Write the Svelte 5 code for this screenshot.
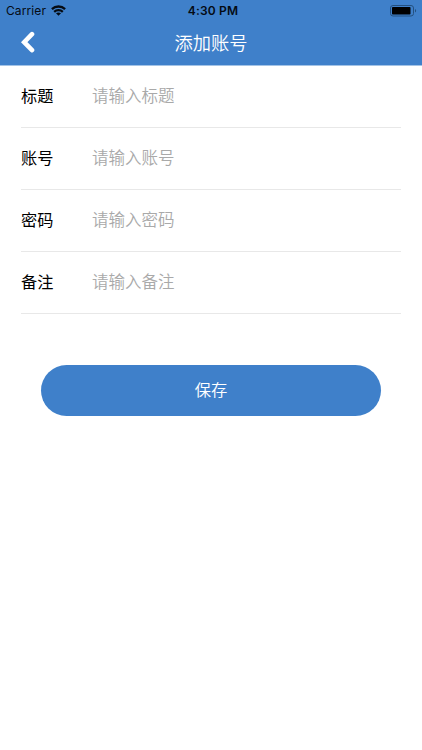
<script>
  let fields = $state([
    { name: 'title', label: '标题', placeholder: '请输入标题', value: '' },
    { name: 'account', label: '账号', placeholder: '请输入账号', value: '' },
    { name: 'password', label: '密码', placeholder: '请输入密码', value: '' },
    { name: 'remark', label: '备注', placeholder: '请输入备注', value: '' }
  ]);

  function handleSubmit(event) {
    event.preventDefault();
  }
</script>

<div class="page">
  <header>
    <div class="status-bar">
      <div class="carrier">
        <span>Carrier</span>
        <svg width="15" height="11" viewBox="0 0 15 11" fill="none" stroke="#050b14" stroke-width="2.3">
          <path d="M0.9 4.1C4.6 0.6 10.4 0.6 14.1 4.1" />
          <path d="M3.2 6.8C5.6 4.6 9.4 4.6 11.8 6.8" />
          <path d="M7.5 10.8L5 8.3C6.4 7.1 8.6 7.1 10 8.3Z" fill="#050b14" stroke="none" />
        </svg>
      </div>
      <span class="time">4:30 PM</span>
      <div class="battery">
        <svg width="27" height="12" viewBox="0 0 27 12">
          <rect x="0.5" y="0.5" width="23" height="10.5" rx="2.5" fill="none" stroke="#24507f" />
          <rect x="2" y="2" width="18.5" height="7.5" rx="0.8" fill="#000" />
          <path d="M25 4V7.6C26.5 7 26.5 4.6 25 4Z" fill="#24507f" />
        </svg>
      </div>
    </div>
    <div class="nav-bar">
      <button class="back" type="button" aria-label="返回">
        <svg width="14" height="22" viewBox="0 0 14 22">
          <path d="M11 3.2L3.2 11.2L11 19.2" fill="none" stroke="#fff" stroke-width="4.6" stroke-linecap="round" />
        </svg>
      </button>
      <h1>添加账号</h1>
    </div>
  </header>

  <form onsubmit={handleSubmit}>
    {#each fields as field}
      <div class="row">
        <label for={field.name}>{field.label}</label>
        <input id={field.name} type="text" placeholder={field.placeholder} bind:value={field.value} />
      </div>
    {/each}
    <button class="save" type="submit">保存</button>
  </form>
</div>

<style>
  :global(body) {
    background: #fff;
  }

  .page {
    min-height: 750px;
    font-family: Inter, 'Noto Sans CJK SC', sans-serif;
    color: #000;
  }

  header {
    box-sizing: border-box;
    height: 66px;
    border-bottom: 1px solid #a3c3e6;
    background: #3f80ca;
  }

  .status-bar {
    display: grid;
    grid-template-columns: 1fr auto 1fr;
    align-items: center;
    height: 21px;
    padding: 0 5px 0 6px;
    color: #050b14;
    font-size: 12px;
  }

  .carrier {
    display: flex;
    align-items: center;
    gap: 5px;
    letter-spacing: 0.1px;
  }

  .time {
    padding-left: 3px;
    font-weight: 600;
    letter-spacing: 0.2px;
  }

  .battery {
    display: flex;
    justify-content: flex-end;
  }

  .nav-bar {
    display: grid;
    grid-template-columns: 60px 1fr 60px;
    align-items: center;
    height: 42px;
  }

  .back {
    display: flex;
    padding: 0 0 0 21px;
    border: none;
    background: none;
  }

  h1 {
    margin: 0;
    color: #fff;
    font-size: 18.3px;
    font-weight: 350;
    text-align: center;
  }

  form {
    padding: 0 21px;
  }

  .row {
    display: flex;
    align-items: center;
    box-sizing: border-box;
    height: 62px;
    border-bottom: 1px solid #e8e8e8;
  }

  label {
    width: 71px;
    padding-bottom: 3px;
    font-size: 16.2px;
  }

  input {
    flex: 1;
    min-width: 0;
    padding: 0 0 2px;
    border: none;
    outline: none;
    background: none;
    font-family: inherit;
    font-size: 16.5px;
  }

  input::placeholder {
    color: #a9a9a9;
    font-weight: 350;
    opacity: 1;
  }

  .save {
    display: block;
    width: 340px;
    height: 51px;
    margin: 51px auto 0;
    padding: 0 0 3px;
    border: none;
    border-radius: 26px;
    background: #3f80ca;
    color: #fff;
    font-family: inherit;
    font-size: 16.3px;
    font-weight: 350;
  }
</style>
